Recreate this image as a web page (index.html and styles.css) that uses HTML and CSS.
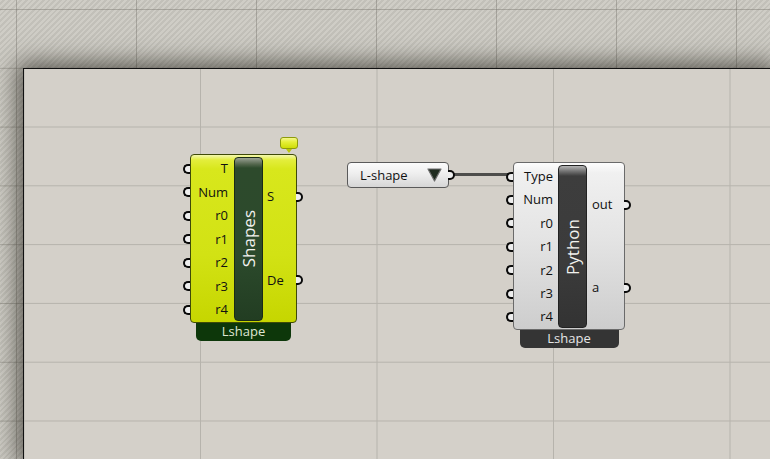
FILE: index.html
```html
<!DOCTYPE html>
<html>
<head>
<meta charset="utf-8">
<link rel="stylesheet" href="styles.css">
</head>
<body>
<div class="stage">
  <div class="canvas">
    <div class="wire"></div>

    <div class="node node-shapes">
      <div class="bubble"></div>
      <div class="body">
        <div class="inputs">
          <div class="port in"><span class="grip"></span>T</div>
          <div class="port in"><span class="grip"></span>Num</div>
          <div class="port in"><span class="grip"></span>r0</div>
          <div class="port in"><span class="grip"></span>r1</div>
          <div class="port in"><span class="grip"></span>r2</div>
          <div class="port in"><span class="grip"></span>r3</div>
          <div class="port in"><span class="grip"></span>r4</div>
        </div>
        <div class="bar"><span class="bar-label">Shapes</span></div>
        <div class="outputs">
          <div class="port out">S<span class="grip"></span></div>
          <div class="port out">De<span class="grip"></span></div>
        </div>
      </div>
      <div class="footer">Lshape</div>
    </div>

    <div class="valuelist">
      <span class="vl-text">L-shape</span>
      <svg class="vl-arrow" width="15" height="14" viewBox="0 0 15 14"><polygon points="1,1 14,1 7.5,13" fill="#1f2b1f" stroke="#6d6d6d" stroke-width="1.2" stroke-linejoin="round"/></svg>
      <span class="grip"></span>
    </div>

    <div class="node node-python">
      <div class="body">
        <div class="inputs">
          <div class="port in"><span class="grip"></span>Type</div>
          <div class="port in"><span class="grip"></span>Num</div>
          <div class="port in"><span class="grip"></span>r0</div>
          <div class="port in"><span class="grip"></span>r1</div>
          <div class="port in"><span class="grip"></span>r2</div>
          <div class="port in"><span class="grip"></span>r3</div>
          <div class="port in"><span class="grip"></span>r4</div>
        </div>
        <div class="bar"><span class="bar-label">Python</span></div>
        <div class="outputs">
          <div class="port out">out<span class="grip"></span></div>
          <div class="port out">a<span class="grip"></span></div>
        </div>
      </div>
      <div class="footer">Lshape</div>
    </div>
  </div>
</div>
</body>
</html>
```

FILE: styles.css
```css
html, body {
  margin: 0;
  padding: 0;
  overflow: hidden;
}

body {
  font-family: "Open Sans", "Noto Sans", sans-serif;
  font-size: 13px;
  color: #111;
}

.stage {
  width: 770px;
  height: 459px;
  box-sizing: border-box;
  padding: 68px 0 0 23px;
  background-color: #c9c7c0;
  background-image:
    linear-gradient(to right, rgba(120,118,110,0.45) 1px, transparent 1px),
    linear-gradient(to bottom, rgba(120,118,110,0.45) 1px, transparent 1px),
    repeating-linear-gradient(135deg, #cfcdc6 0, #cfcdc6 2px, #c2c0b9 2px, #c2c0b9 4px);
  background-size: 120px 100%, 100% 58.8px, auto;
  background-position: 16px 0, 0 9px, 0 0;
}

.canvas {
  position: relative;
  height: 100%;
  box-sizing: border-box;
  border-top: 1px solid #111;
  border-left: 1px solid #111;
  background-color: #d4d0c9;
  background-image:
    linear-gradient(to right, #b6b3ac 1px, transparent 1px),
    linear-gradient(to bottom, #b6b3ac 1px, transparent 1px);
  background-size: 176.5px 100%, 100% 58.8px;
  background-position: 176px 0, 0 57.5px;
  box-shadow: 0 0 22px 6px rgba(45, 43, 36, 0.68);
}

/* wire */
.wire {
  position: absolute;
  left: 428px;
  top: 104px;
  width: 60px;
  height: 3px;
  background: #4d4d4b;
}

/* generic node */
.node {
  position: absolute;
  display: flex;
  flex-direction: column;
  align-items: center;
}

.body {
  position: relative;
  display: flex;
  align-self: stretch;
  box-sizing: border-box;
  border-radius: 4px;
}

.inputs {
  display: flex;
  flex-direction: column;
  padding-top: 2px;
}

.port {
  position: relative;
  height: 23.5px;
  line-height: 23.5px;
  display: flex;
  white-space: nowrap;
}

.port.in {
  justify-content: flex-end;
}

.outputs {
  flex: 1;
  display: flex;
  flex-direction: column;
}

.outputs .port {
  flex: 1;
  align-items: center;
  padding-left: 4px;
}

.grip {
  position: absolute;
  top: 50%;
  width: 5px;
  height: 6px;
  margin-top: -5px;
  border: 2px solid #0a0a0a;
  background: #eeeeee;
}

.port.in .grip {
  left: -8px;
  border-right: none;
  border-radius: 5px 0 0 5px;
}

.port.out .grip {
  right: -7px;
  border-left: none;
  border-radius: 0 5px 5px 0;
}

.bar {
  display: flex;
  align-items: center;
  justify-content: center;
  margin: 2px 0 1px;
  width: 29px;
  box-sizing: border-box;
  border-radius: 4px;
}

.bar-label {
  writing-mode: vertical-rl;
  transform: rotate(180deg);
  font-size: 17px;
  line-height: 1;
  color: #f2f2ee;
}

.footer {
  height: 18px;
  line-height: 17px;
  text-align: center;
  border-radius: 0 0 5px 5px;
  font-size: 13px;
}

/* Shapes (yellow) node */
.node-shapes {
  left: 166px;
  top: 85px;
  width: 107px;
}

.node-shapes .body {
  height: 169px;
  border: 1px solid #3f4a08;
  background: linear-gradient(to bottom, #f4f8b0 0, #e3ee3c 5px, #d8e71c 14px, #d2e214 60%, #c6d600 100%);
}

.node-shapes .inputs {
  width: 43px;
}

.node-shapes .port.in {
  padding-right: 6px;
}

.node-shapes .bar {
  border: 1px solid #1b2b16;
  background: linear-gradient(to bottom, #9aa294 0, #56684f 6px, #2d4a2c 10px, #2c4a2c 60%, #223d22 100%);
}

.node-shapes .outputs .port {
  padding-left: 4px;
}

.node-shapes .footer {
  width: 95px;
  background: #0d370a;
  color: #dfe6d2;
}

.bubble {
  position: absolute;
  left: 90px;
  top: -17px;
  width: 16px;
  height: 10px;
  border: 1px solid #8e9b0c;
  border-radius: 3px;
  background: linear-gradient(to bottom, #f4f78c 0, #e6ef38 40%, #cfdd08 100%);
}

.bubble::after {
  content: "";
  position: absolute;
  left: 5px;
  bottom: -5px;
  border-left: 3px solid transparent;
  border-right: 3px solid transparent;
  border-top: 4px solid #b9c60a;
}

/* value list */
.valuelist {
  position: absolute;
  left: 323px;
  top: 93px;
  width: 102px;
  height: 26px;
  box-sizing: border-box;
  display: flex;
  align-items: center;
  justify-content: space-between;
  padding: 0 6px 0 12px;
  border: 1px solid #5a5a5a;
  border-radius: 4px;
  background: linear-gradient(to bottom, #fbfbfb 0, #eeeeee 45%, #d6d6d6 100%);
}

.vl-text {
  font-size: 13px;
  line-height: 1;
}

.vl-arrow {
  display: block;
}

.valuelist .grip {
  right: -7px;
  border-left: none;
  border-radius: 0 5px 5px 0;
}

/* Python node */
.node-python {
  left: 489px;
  top: 93px;
  width: 112px;
}

.node-python .body {
  height: 168px;
  border: 1px solid #6a6a6a;
  background: linear-gradient(to bottom, #fdfdfd 0, #f0f0f0 10px, #e4e4e4 45%, #cdcdcd 100%);
}

.node-python .inputs {
  width: 44px;
}

.node-python .port.in {
  padding-right: 5px;
}

.node-python .port {
  height: 23.4px;
  line-height: 23.4px;
}

.node-python .bar {
  border: 1px solid #222;
  background: linear-gradient(to bottom, #b5b5b5 0, #6a6a6a 6px, #3d3d3d 10px, #3b3b3b 60%, #333 100%);
}

.node-python .outputs .port {
  padding-left: 5px;
}

.node-python .footer {
  width: 99px;
  background: #343434;
  color: #e6e6e6;
}
```
